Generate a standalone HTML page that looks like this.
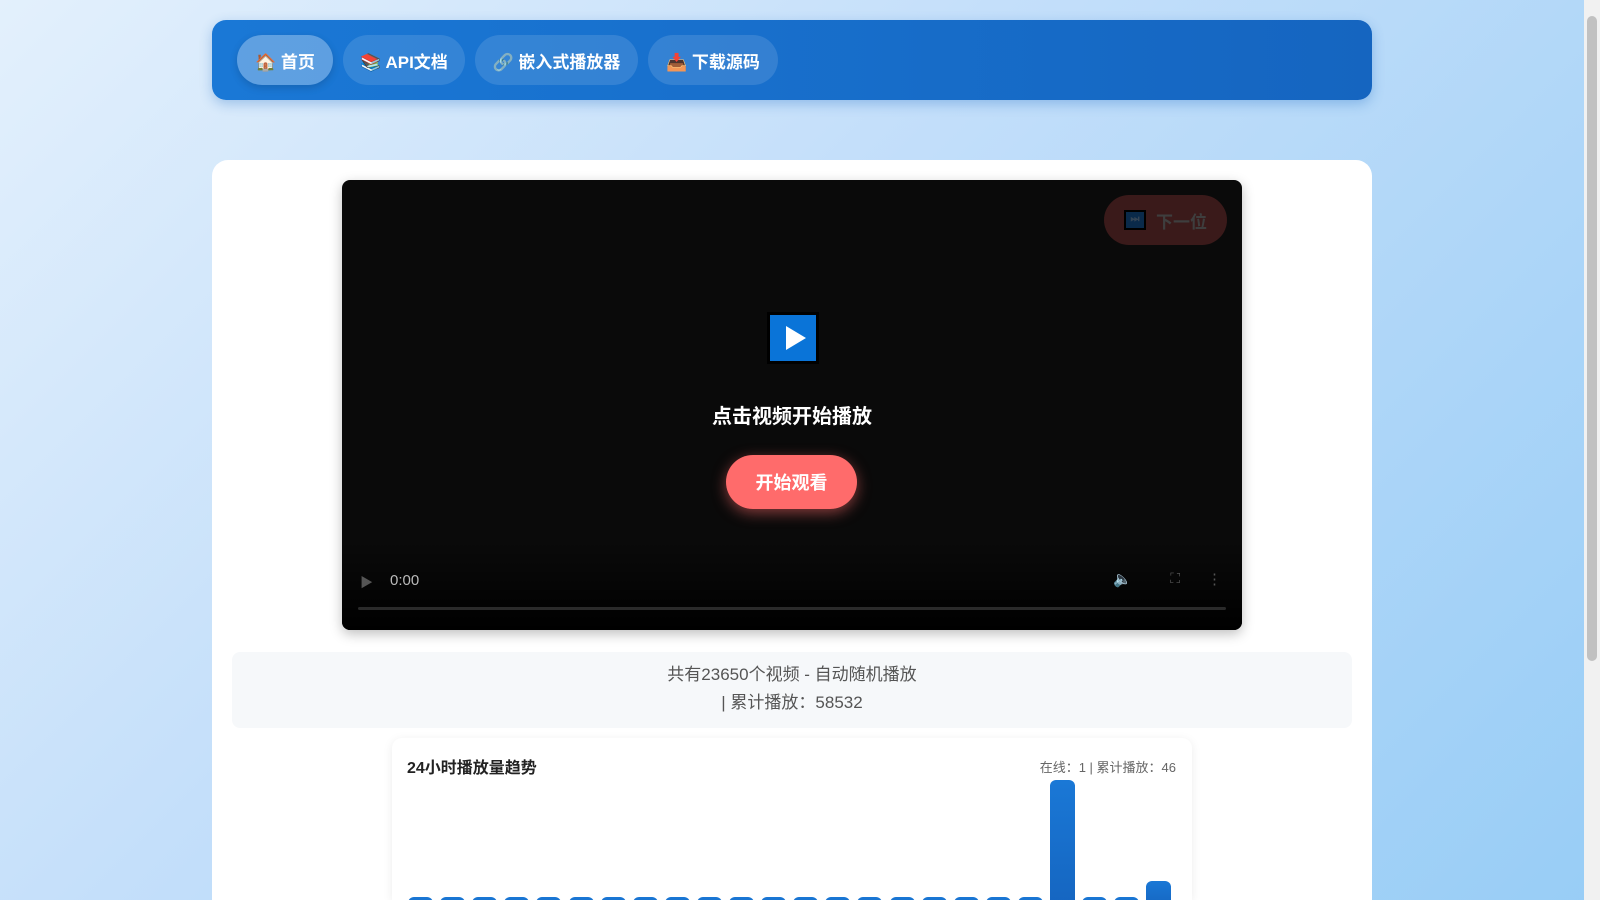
<!DOCTYPE html>
<html><head><meta charset="utf-8"><style>
*{margin:0;padding:0;box-sizing:border-box}
html,body{width:1600px;height:900px;overflow:hidden;background:linear-gradient(135deg,#e3f0fc 0%,#c4dffa 40%,#98cdf6 100%)}
body{font-family:"Liberation Sans","Noto Sans CJK SC",sans-serif;position:relative}
.nav{position:absolute;left:212px;top:20px;width:1160px;height:80px;border-radius:14px;background:linear-gradient(90deg,#1a78d6,#1565c0);box-shadow:0 4px 12px rgba(21,101,192,.3)}
.btn{position:absolute;top:15px;height:50px;border-radius:25px;background:rgba(255,255,255,.12);color:#fff;font-weight:bold;font-size:17px;display:flex;align-items:center;justify-content:center;gap:4px}
.btn.a{background:rgba(255,255,255,.3);box-shadow:0 3px 8px rgba(0,0,0,.15)}
.card{position:absolute;left:212px;top:160px;width:1160px;height:740px;background:#fff;border-radius:16px 16px 0 0}
.video{position:absolute;left:130px;top:20px;width:900px;height:450px;background:#0a0a0a;border-radius:8px;box-shadow:0 4px 12px rgba(0,0,0,.25);overflow:hidden}
.play{position:absolute;left:425px;top:132px;width:52px;height:52px;background:#0a74d8;border:3px solid #000}
.play:after{content:"";position:absolute;left:16px;top:11px;border-left:20px solid #fff;border-top:12px solid transparent;border-bottom:12px solid transparent}
.t1{position:absolute;left:0;width:900px;top:220px;text-align:center;color:#fff;font-weight:bold;font-size:20px}
.go{position:absolute;left:384px;top:275px;width:131px;height:54px;border-radius:27px;background:#ff6b6b;color:#fff;font-weight:bold;font-size:18px;display:flex;align-items:center;justify-content:center;box-shadow:0 4px 14px rgba(255,107,107,.5)}
.next{position:absolute;left:762px;top:15px;width:123px;height:50px;border-radius:25px;background:#3a1a1a;color:#3e3e3e;font-weight:bold;font-size:17px;display:flex;align-items:center;justify-content:center;gap:10px}
.ctrl{position:absolute;left:0;bottom:0;width:900px;height:90px;background:linear-gradient(transparent,#000)}
.info{position:absolute;left:20px;top:492px;width:1120px;height:76px;background:#f6f8fa;border-radius:8px;text-align:center;color:#555;font-size:17px;line-height:28px;padding-top:9px}
.chart{position:absolute;left:180px;top:578px;width:800px;height:162px;overflow:hidden;background:#fff;border-radius:10px 10px 0 0;box-shadow:0 2px 10px rgba(0,0,0,.08)}
.bar{position:absolute;width:25px;height:60px;border-radius:6px 6px 0 0;background:linear-gradient(#1a78d6,#1565c0)}
.sb{position:absolute;left:1584px;top:0;width:16px;height:900px;background:#f1f1f1}
</style></head><body>
<div class="nav">
<div class="btn a" style="left:25px;width:96px">🏠 首页</div>
<div class="btn" style="left:131px;width:122px">📚 API文档</div>
<div class="btn" style="left:263px;width:163px">🔗 嵌入式播放器</div>
<div class="btn" style="left:436px;width:130px">📥 下载源码</div>
</div>
<div class="card">
<div class="video">
<div class="next"><span style="display:inline-block;width:22px;height:20px;background:#0a2a4a;border:2px solid #000;color:#345;font-size:10px;text-align:center;line-height:16px">⏭</span>下一位</div>
<div class="play"></div>
<div class="t1">点击视频开始播放</div>
<div class="go">开始观看</div>
<div class="ctrl">
<span style="position:absolute;left:18px;top:32px;color:#555;font-size:13px">▶</span>
<span style="position:absolute;left:48px;top:32px;color:#bbb;font-size:15px">0:00</span>
<span style="position:absolute;right:110px;top:30px;color:#555;font-size:15px">🔈</span>
<span style="position:absolute;right:62px;top:30px;color:#555;font-size:14px">⛶</span>
<span style="position:absolute;right:20px;top:30px;color:#555;font-size:15px">⋮</span>
<div style="position:absolute;left:16px;right:16px;bottom:20px;height:3px;background:#2a2a2a;border-radius:2px"></div>
</div>
</div>
<div class="info">共有23650个视频 - 自动随机播放<br>| 累计播放：58532</div>
<div class="chart">
<div style="position:absolute;left:15px;top:16px;font-weight:bold;font-size:16px;color:#222">24小时播放量趋势</div>
<div style="position:absolute;right:16px;top:19px;font-size:13px;color:#666">在线：1 | 累计播放：46</div>
<div id="bars"></div>
</div>
</div>
<div class="sb"><div style="position:absolute;left:3px;top:16px;width:10px;height:645px;background:#c1c1c1;border-radius:5px"></div></div>
<script>
var h='';for(var i=0;i<24;i++){var x=16+i*32.1,t=i==20?42:(i==23?143:159);h+='<div class="bar" style="left:'+x+'px;top:'+t+'px;height:'+(170-t)+'px"></div>';}
document.getElementById('bars').innerHTML=h;
</script>
</body></html>
